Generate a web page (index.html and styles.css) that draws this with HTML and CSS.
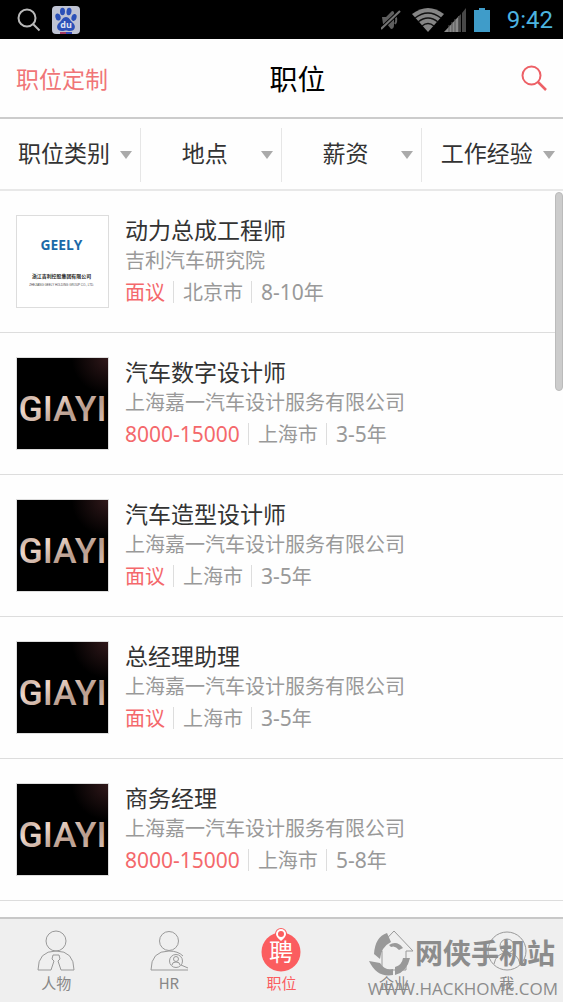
FILE: index.html
```html
<!DOCTYPE html>
<html lang="zh-CN">
<head>
    <meta charset="UTF-8">
    <meta name="viewport" content="width=device-width, initial-scale=1.0">
    <title>职位</title>
    <link rel="stylesheet" href="styles.css">
</head>
<body>
    <!-- shared drawings -->
    <svg class="defs" width="0" height="0" aria-hidden="true">
        <defs>
            <linearGradient id="metal" x1="0" y1="0" x2="1" y2="1">
                <stop offset="0" stop-color="#a98c7d"/>
                <stop offset="0.3" stop-color="#f0d9cc"/>
                <stop offset="0.6" stop-color="#b89c8d"/>
                <stop offset="1" stop-color="#e4ccbe"/>
            </linearGradient>
            <radialGradient id="glow" cx="1" cy="0" r="0.4">
                <stop offset="0" stop-color="#30181a"/>
                <stop offset="1" stop-color="#000"/>
            </radialGradient>
            <symbol id="giayi" viewBox="0 0 92 92">
                <rect width="92" height="92" fill="url(#glow)"/>
                <text class="giayi-text" x="46" y="64" text-anchor="middle" fill="url(#metal)">GIAYI</text>
            </symbol>
        </defs>
    </svg>

    <div class="status-bar">
        <div class="status-group">
            <svg width="24" height="24" viewBox="0 0 24 24" fill="none" stroke="#b9b9b9" stroke-width="2">
                <circle cx="10" cy="10" r="8.5"/>
                <path d="M16 16l6.500 6.500"/>
            </svg>
            <svg width="28" height="28" viewBox="0 0 28 28">
                <rect width="28" height="28" rx="4" fill="#bfc3d3"/>
                <g fill="#2b50b8">
                    <ellipse cx="6" cy="11" rx="2.600" ry="3.600" transform="rotate(-15 6 11)"/>
                    <ellipse cx="10.500" cy="5.500" rx="2.500" ry="3.700"/>
                    <ellipse cx="17" cy="5.500" rx="2.500" ry="3.700" transform="rotate(8 17 5.500)"/>
                    <ellipse cx="22" cy="11.500" rx="2.500" ry="3.600" transform="rotate(15 22 11.500)"/>
                    <path d="M14 11c3 0 4 3 6 5 5 4 3 9-2 9-2 0-3-.500-4-.500s-2 .500-4 .500c-5 0-7-5-2-9 2-2 3-5 6-5z"/>
                </g>
                <text class="du-text" x="14" y="22" text-anchor="middle" fill="#dfe3f2">du</text>
                <path d="M8 27h6" stroke="#a33b62" stroke-width="2"/>
                <path d="M14 27h6" stroke="#3347b5" stroke-width="2"/>
            </svg>
        </div>
        <div class="status-group status-right">
            <svg width="20" height="22" viewBox="0 0 20 22">
                <path d="M1 8h4l6-6q3 0 2 5v9q0 4-3 4l-4-5H2z" fill="#5e5e5e"/>
                <path d="M13 6q4 4 1 9" fill="none" stroke="#5e5e5e" stroke-width="2"/>
                <path d="M0 20L19 2" stroke="#000" stroke-width="4"/>
                <path d="M0 20L19 2" stroke="#747474" stroke-width="2"/>
            </svg>
            <svg class="wifi" width="32" height="24" viewBox="0 0 32 24">
                <path d="M0 6Q16-6 32 6L16 24z" fill="#858585"/>
                <path d="M3 10Q16 0 29 10M6 14Q16 6 26 14M10 18Q16 13 22 18" fill="none" stroke="#111" stroke-width="1.500"/>
            </svg>
            <svg width="22" height="24" viewBox="0 0 22 24">
                <path d="M0 24L14 9v15z" fill="#8b8b8b"/>
                <path d="M15 8l2-2v18h-2zM18 5l4-5v24h-4z" fill="#484848"/>
                <path d="M5 17v7M8 14v10M11 11v13M14.500 8v16" stroke="#555"/>
            </svg>
            <svg class="battery" width="16" height="24" viewBox="0 0 16 24">
                <path d="M5 0h6v2h5v22H0V2h5z" fill="#3f9cc9"/>
            </svg>
            <span class="clock">9:42</span>
        </div>
    </div>

    <header class="header">
        <a class="header-link" href="#">职位定制</a>
        <h1>职位</h1>
        <button class="search-button" type="button" aria-label="搜索">
            <svg width="26" height="26" viewBox="0 0 26 26" fill="none" stroke="#ed6066" stroke-width="2">
                <circle cx="10.500" cy="10.500" r="9"/>
                <path d="M17 17l8 8" stroke-width="2.500"/>
            </svg>
        </button>
    </header>

    <div class="filters">
        <label class="filter"><select aria-label="职位类别"><option>职位类别</option></select></label>
        <label class="filter"><select aria-label="地点"><option>地点</option></select></label>
        <label class="filter"><select aria-label="薪资"><option>薪资</option></select></label>
        <label class="filter"><select aria-label="工作经验"><option>工作经验</option></select></label>
    </div>

    <main class="job-list">
        <div class="scrollbar"></div>
        <article class="job">
            <svg class="logo logo-light" viewBox="0 0 92 92">
                <rect width="92" height="92" fill="#fff"/>
                <text class="geely-text" x="45" y="34" text-anchor="middle">GEELY</text>
                <text class="geely-cn" x="45" y="63" text-anchor="middle">浙江吉利控股集团有限公司</text>
                <text class="geely-en" x="45" y="71" text-anchor="middle">ZHEJIANG GEELY HOLDING GROUP CO., LTD.</text>
            </svg>
            <div class="job-info">
                <h2>动力总成工程师</h2>
                <p class="company">吉利汽车研究院</p>
                <p class="meta"><span class="salary">面议</span><span>北京市</span><span><b>8-10</b>年</span></p>
            </div>
        </article>
        <article class="job">
            <svg class="logo"><use href="#giayi"/></svg>
            <div class="job-info">
                <h2>汽车数字设计师</h2>
                <p class="company">上海嘉一汽车设计服务有限公司</p>
                <p class="meta"><span class="salary"><b>8000-15000</b></span><span>上海市</span><span><b>3-5</b>年</span></p>
            </div>
        </article>
        <article class="job">
            <svg class="logo"><use href="#giayi"/></svg>
            <div class="job-info">
                <h2>汽车造型设计师</h2>
                <p class="company">上海嘉一汽车设计服务有限公司</p>
                <p class="meta"><span class="salary">面议</span><span>上海市</span><span><b>3-5</b>年</span></p>
            </div>
        </article>
        <article class="job">
            <svg class="logo"><use href="#giayi"/></svg>
            <div class="job-info">
                <h2>总经理助理</h2>
                <p class="company">上海嘉一汽车设计服务有限公司</p>
                <p class="meta"><span class="salary">面议</span><span>上海市</span><span><b>3-5</b>年</span></p>
            </div>
        </article>
        <article class="job">
            <svg class="logo"><use href="#giayi"/></svg>
            <div class="job-info">
                <h2>商务经理</h2>
                <p class="company">上海嘉一汽车设计服务有限公司</p>
                <p class="meta"><span class="salary"><b>8000-15000</b></span><span>上海市</span><span><b>5-8</b>年</span></p>
            </div>
        </article>
    </main>

    <nav class="tab-bar">
        <a class="tab" href="#">
            <svg width="40" height="44" viewBox="0 0 40 44">
                <circle cx="20" cy="13" r="10"/>
                <path d="M15 42H2Q2 23 20 23T38 42H25L22 33l2-2-1-4h-6l-1 4 2 2z"/>
            </svg>
            <span>人物</span>
        </a>
        <a class="tab" href="#">
            <svg width="40" height="44" viewBox="0 0 40 44">
                <circle cx="20" cy="13" r="9.500"/>
                <path d="M39 42H2Q2 23 20 23q9 0 14 5"/>
                <circle cx="27" cy="33" r="6.500"/>
                <circle cx="27" cy="31" r="2.500"/>
                <path d="M23 37q0-3 4-3t4 3M32 37l7 3"/>
            </svg>
            <span>HR</span>
        </a>
        <a class="tab active" href="#">
            <svg width="40" height="44" viewBox="0 0 40 44">
                <circle cx="20" cy="24" r="19.500" fill="#fb5d5f" stroke="none"/>
                <circle cx="20" cy="6" r="6" fill="#fb5d5f" stroke="none"/>
                <path d="M20 13q-5-4-5-7a5 5 0 0 1 10 0q0 3-5 7z" fill="#fff" stroke="none"/>
                <circle cx="20" cy="6" r="3" fill="#fb5d5f" stroke="none"/>
                <text class="hire-text" x="20" y="33" text-anchor="middle">聘</text>
            </svg>
            <span>职位</span>
        </a>
        <a class="tab" href="#">
            <svg width="40" height="44" viewBox="0 0 40 44">
                <path d="M1 23L20 3l19 20h-7v19H8V23z"/>
            </svg>
            <span>企业</span>
        </a>
        <a class="tab" href="#">
            <svg width="40" height="44" viewBox="0 0 40 44">
                <circle cx="20" cy="23" r="19"/>
                <circle cx="20" cy="18" r="7"/>
                <path d="M7 36q2-11 13-11t13 11M16 18h8M20 14v8"/>
            </svg>
            <span>我</span>
        </a>
        <div class="watermark">
            <div class="watermark-top">
                <svg width="42" height="44" viewBox="0 0 42 44" fill="#999">
                    <path d="M18 1Q6 5 5 22l6 5Q12 15 22 10z"/>
                    <path d="M0 29l11 2q5 8 13 6v6Q8 46 0 29z"/>
                    <path d="M20 13q8-5 14 3l-4 2q-4-5-8-3z"/>
                    <path d="M34 26q-1 7-8 9v8q12-3 15-17z"/>
                </svg>
                <span>网侠手机站</span>
            </div>
            <div class="watermark-url">WWW.HACKHOME.COM</div>
        </div>
    </nav>
</body>
</html>
```
FILE: styles.css
```css
* {
    box-sizing: border-box;
}

body {
    margin: 0;
    display: flex;
    flex-direction: column;
    min-height: 100vh;
    background-color: #fefefe;
    color: #333;
    font-family: "Noto Sans CJK SC", sans-serif;
}

h1,
h2,
p {
    margin: 0;
    font-weight: 400;
}

a {
    color: inherit;
    text-decoration: none;
}

.defs {
    position: absolute;
}

/* status bar */
.status-bar {
    display: flex;
    justify-content: space-between;
    align-items: center;
    height: 39px;
    padding: 0 10px 0 17px;
    background-color: #000;
}

.status-group {
    display: flex;
    align-items: center;
    gap: 11px;
}

.status-right {
    gap: 0;
}

.wifi {
    margin-left: 11px;
}

.battery {
    margin: 0 17px 0 8px;
}

.clock {
    font-family: Roboto, sans-serif;
    font-size: 24px;
    color: #4cb4e0;
}

.du-text {
    font: bold 9px "Open Sans", sans-serif;
}

/* header */
.header {
    display: grid;
    grid-template-columns: 1fr auto 1fr;
    align-items: center;
    height: 80px;
    padding: 0 16px;
    border-bottom: 2px solid #ccc;
}

.header-link {
    font-size: 23px;
    color: #f07577;
}

.header h1 {
    padding-left: 32px;
    font-size: 28px;
    color: #000;
}

.search-button {
    justify-self: end;
    display: flex;
    padding: 0;
    border: none;
    background: none;
    cursor: pointer;
}

/* filters */
.filters {
    display: grid;
    grid-template-columns: repeat(4, 1fr);
    height: 72px;
    padding: 9px 0 7px;
    border-bottom: 2px solid #e8e8e8;
}

.filter {
    position: relative;
    display: flex;
    border-right: 1px solid #e6e6e6;
}

.filter:last-child {
    border-right: none;
}

.filter select {
    width: 100%;
    padding: 0 12px 6px 0;
    border: none;
    background: none;
    appearance: none;
    font-family: inherit;
    font-size: 23px;
    color: #333;
    text-align: center;
    text-align-last: center;
}

.filter::after {
    content: "";
    position: absolute;
    right: 8px;
    top: 23px;
    border: 6px solid transparent;
    border-top: 8px solid #aaa;
    border-bottom: none;
    pointer-events: none;
}

/* job list */
.job-list {
    position: relative;
    flex: 1;
}

.scrollbar {
    position: absolute;
    top: 1px;
    right: 0;
    width: 8px;
    height: 199px;
    border: 1px solid #bbb;
    border-radius: 4px;
    background-color: #ccc;
}

.job {
    display: flex;
    gap: 16px;
    padding: 24px 16px;
    border-bottom: 1px solid #ddd;
}

.logo {
    flex: none;
    width: 93px;
    height: 93px;
    border: 1px solid #ddd;
}

.giayi-text {
    font: 500 36px Roboto, sans-serif;
}

.geely-text {
    font: bold 14px "Open Sans", sans-serif;
    fill: #1c69a8;
}

.geely-cn {
    font: bold 5px "Noto Sans CJK SC", sans-serif;
    fill: #222;
}

.geely-en {
    font: 3px "Liberation Sans", sans-serif;
    fill: #444;
}

.job-info h2 {
    font-size: 23px;
    line-height: 28px;
}

.company {
    font-size: 20px;
    line-height: 34px;
    color: #999;
}

.meta {
    display: flex;
    align-items: center;
    font-size: 20px;
    line-height: 30px;
    color: #999;
}

.meta b {
    font-family: "Noto Sans", sans-serif;
    font-size: 21px;
    font-weight: 400;
}

.meta span {
    display: flex;
    align-items: center;
}

.meta span + span::before {
    content: "";
    height: 22px;
    margin: 0 9px 0 8px;
    border-left: 1px solid #ddd;
}

.meta .salary {
    color: #f4686b;
}

/* bottom tabs */
.tab-bar {
    position: relative;
    display: grid;
    grid-template-columns: repeat(5, 1fr);
    height: 85px;
    border-top: 2px solid #c8c8c8;
    background-color: #efefef;
}

.tab {
    display: flex;
    flex-direction: column;
    align-items: center;
    padding-top: 9px;
    font-size: 15px;
    line-height: 22px;
    color: #888;
}

.tab svg {
    fill: none;
    stroke: #999;
    stroke-width: 1;
}

.tab.active {
    color: #fb5d5f;
}

.tab .hire-text {
    font-size: 24px;
    fill: #fff;
    stroke: none;
}

.watermark {
    position: absolute;
    right: 5px;
    bottom: 0;
    color: #8c8c8c;
    pointer-events: none;
}

.watermark-top {
    display: flex;
    justify-content: flex-end;
    gap: 4px;
    padding-right: 3px;
    font-size: 28px;
    font-weight: 700;
    line-height: 40px;
}

.watermark-url {
    font-family: "Open Sans", sans-serif;
    font-size: 17px;
    line-height: 26px;
}
```
